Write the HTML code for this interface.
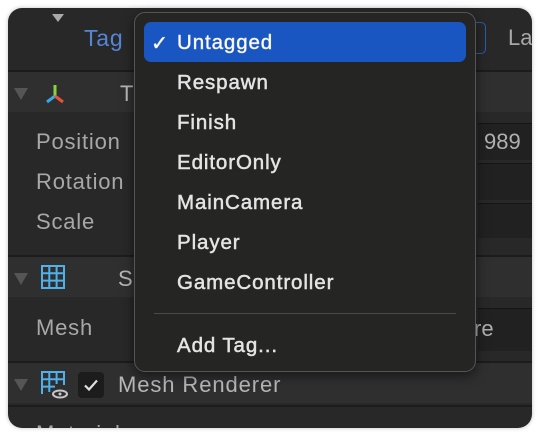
<!DOCTYPE html>
<html><head><meta charset="utf-8"><style>
body{margin:0;width:540px;height:436px;background:#fff;position:relative;overflow:hidden;font-family:"Liberation Sans",sans-serif}
.p{position:absolute;left:8px;top:8px;width:524px;height:420px;background:#282828;border-radius:14px;overflow:hidden;box-shadow:0 0 4px rgba(0,0,0,.25)}
.a{position:absolute}
.lbl{position:absolute;color:#a8a8a8;font-size:22px;letter-spacing:.8px}
.hdr{position:absolute;left:0;width:524px;height:40px;background:#2f2f2f;border-top:2px solid #1c1c1c}
.f{position:absolute;left:470px;width:54px;background:#212121;border-top:1px solid #151515}
.tri{position:absolute;width:0;height:0;border-left:7px solid transparent;border-right:7px solid transparent;border-top:12px solid #555}
.m{position:absolute;left:134px;top:12px;width:340px;height:358px;background:#252523;border:1px solid #555;border-radius:11px;box-shadow:0 4px 12px rgba(0,0,0,.5)}
.it{position:absolute;left:42px;color:#e4e4e4;font-size:20.5px;letter-spacing:.9px;-webkit-text-stroke:.5px #e4e4e4}
</style></head><body>
<div class="p">
  <div class="tri" style="left:44px;top:6px;border-top-color:#aaa;border-width:8px 6px 0 6px"></div>
  <div class="a" style="left:76px;top:17px;color:#5585d6;font-size:23px;letter-spacing:.8px">Tag</div>
  <div class="a" style="left:440px;top:14px;width:36px;height:30px;border:1.5px solid #2a5cb8;border-radius:5px"></div>
  <div class="a" style="left:500px;top:17px;color:#a8a8a8;font-size:22px">La</div>

  <div class="hdr" style="top:62px"></div>
  <div class="tri" style="left:6px;top:80px"></div>
  <svg class="a" style="left:32px;top:72px" width="30" height="30" viewBox="0 0 30 30">
    <line x1="15" y1="16" x2="15" y2="5" stroke="#8bd13b" stroke-width="3"/>
    <line x1="15" y1="16" x2="7" y2="22" stroke="#35a8e8" stroke-width="3"/>
    <line x1="15" y1="16" x2="23" y2="22" stroke="#e8513a" stroke-width="3"/>
  </svg>
  <div class="a" style="left:112px;top:73px;color:#b8b8b8;font-size:22px">T</div>

  <div class="f" style="top:115px;height:36px"></div>
  <div class="a" style="left:476px;top:121px;color:#b0b0b0;font-size:22px">989</div>
  <div class="f" style="top:155px;height:36px"></div>
  <div class="f" style="top:195px;height:34px"></div>
  <div class="lbl" style="left:28px;top:121px">Position</div>
  <div class="lbl" style="left:28px;top:161px">Rotation</div>
  <div class="lbl" style="left:28px;top:201px">Scale</div>

  <div class="hdr" style="top:247px"></div>
  <div class="tri" style="left:6px;top:265px"></div>
  <svg class="a" style="left:32px;top:256px" width="26" height="26" viewBox="0 0 26 26" fill="none" stroke="#4fb0ea" stroke-width="2">
    <rect x="2" y="2" width="22" height="22"/><line x1="9.3" y1="2" x2="9.3" y2="24"/><line x1="16.6" y1="2" x2="16.6" y2="24"/><line x1="2" y1="9.3" x2="24" y2="9.3"/><line x1="2" y1="16.6" x2="24" y2="16.6"/>
  </svg>
  <div class="a" style="left:110px;top:258px;color:#b8b8b8;font-size:22px">S</div>
  <div class="f" style="top:300px;height:42px"></div>
  <div class="a" style="left:466px;top:308px;color:#b0b0b0;font-size:22px">re</div>
  <div class="lbl" style="left:28px;top:307px">Mesh</div>

  <div class="hdr" style="top:353px"></div>
  <div class="tri" style="left:6px;top:371px"></div>
  <svg class="a" style="left:32px;top:362px" width="30" height="30" viewBox="0 0 30 30" fill="none" stroke="#4fb0ea" stroke-width="2">
    <path d="M2 24V2h22v13M9.3 2v20M16.6 2v12M2 9.3h22M2 16.6h13"/>
    <ellipse cx="20" cy="24" rx="7" ry="3.5" stroke="#c8c8c8"/><circle cx="20" cy="24" r="1.5" fill="#c8c8c8" stroke="none"/>
  </svg>
  <div class="a" style="left:70px;top:364px;width:26px;height:26px;background:#1c1c1c;border-radius:4px"></div>
  <svg class="a" style="left:74px;top:368px" width="18" height="18" viewBox="0 0 18 18"><path d="M3 9.5l4 4 8-9" fill="none" stroke="#e0e0e0" stroke-width="2.2"/></svg>
  <div class="a" style="left:110px;top:364px;color:#b8b8b8;font-size:22px;letter-spacing:.9px">Mesh Renderer</div>
  <div class="a" style="left:0;top:397px;width:524px;height:2px;background:#1c1c1c"></div>
  <div class="lbl" style="left:28px;top:413px">Materials</div>
</div>

<div class="m">
  <div class="a" style="left:9px;top:9px;width:322px;height:40px;background:#1a56c2;border-radius:7px"></div>
  <div class="it" style="left:16px;top:18px;color:#fff">✓</div>
  <div class="it" style="top:18px;color:#fff">Untagged</div>
  <div class="it" style="top:58px">Respawn</div>
  <div class="it" style="top:98px">Finish</div>
  <div class="it" style="top:138px">EditorOnly</div>
  <div class="it" style="top:178px">MainCamera</div>
  <div class="it" style="top:218px">Player</div>
  <div class="it" style="top:258px">GameController</div>
  <div class="a" style="left:19px;top:300px;width:302px;height:1px;background:#4a4a48"></div>
  <div class="it" style="top:321px">Add Tag...</div>
</div>
</body></html>
